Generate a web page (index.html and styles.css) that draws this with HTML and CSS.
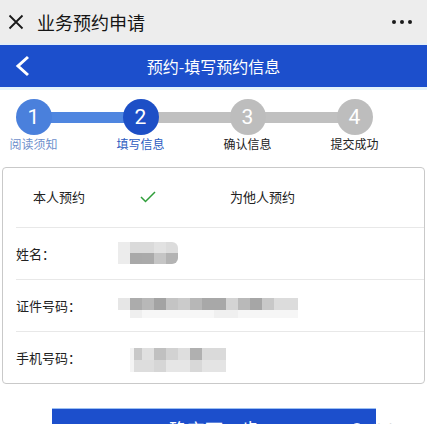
FILE: index.html
```html
<!DOCTYPE html>
<html lang="zh-CN">
<head>
<meta charset="utf-8">
<title>业务预约申请</title>
<link rel="stylesheet" href="styles.css">
</head>
<body>
  <header class="topbar">
    <svg class="close-icon" width="16" height="16" viewBox="0 0 16 16"><path d="M1.5 1.5 L14.5 14.5 M14.5 1.5 L1.5 14.5" stroke="#1a1a1a" stroke-width="1.8" fill="none"/></svg>
    <span class="topbar-title">业务预约申请</span>
    <span class="more"><i></i><i></i><i></i></span>
  </header>

  <nav class="navbar">
    <span class="back">
      <svg width="16" height="22" viewBox="0 0 16 22"><path d="M13 2 L3 11 L13 20" stroke="#fff" stroke-width="3" fill="none" stroke-linejoin="miter"/></svg>
    </span>
    <span class="nav-title">预约-填写预约信息</span>
    <span></span>
  </nav>

  <ol class="steps">
    <li class="step done"><span class="circle">1</span><span class="label">阅读须知</span></li>
    <li class="step current"><span class="circle">2</span><span class="label">填写信息</span></li>
    <li class="step"><span class="circle">3</span><span class="label">确认信息</span></li>
    <li class="step"><span class="circle">4</span><span class="label">提交成功</span></li>
  </ol>

  <section class="card">
    <div class="row row-choice">
      <div class="option">
        <span>本人预约</span>
        <svg class="check" width="16" height="12" viewBox="0 0 16 12"><path d="M1 6 L5.5 10.5 L15 1" stroke="#2f9e3a" stroke-width="1.5" fill="none"/></svg>
      </div>
      <div class="option"><span>为他人预约</span></div>
    </div>
    <div class="row">
      <span class="field-label">姓名：</span>
      <span class="blur blur-name"></span>
    </div>
    <div class="row">
      <span class="field-label">证件号码：</span>
      <span class="blur blur-id"></span>
    </div>
    <div class="row">
      <span class="field-label">手机号码：</span>
      <span class="blur blur-phone"></span>
    </div>
  </section>

  <div class="actions">
    <button class="primary">确定下一步</button>
    <span class="watermark"><i></i><span>头条</span></span>
  </div>
</body>
</html>
```

FILE: styles.css
```css
html { overflow: hidden; }
body {
  margin: 0;
  background: #fff;
  font-family: "Noto Sans CJK SC", "Noto Sans", sans-serif;
  color: #222;
}

.topbar {
  height: 43px;
  background: #ededed;
  border-bottom: 2px solid #e4eef6;
  display: flex;
  align-items: center;
  padding: 0 15px 0 8px;
}
.close-icon { flex: none; margin-top: 1px; }
.topbar-title {
  margin-left: 13px;
  font-size: 18px;
  color: #151515;
  line-height: 24px;
}
.more { margin-left: auto; display: flex; gap: 4px; }
.more i {
  width: 4px; height: 4px; border-radius: 50%;
  background: #1a1a1a; display: block;
}

.navbar {
  height: 42px;
  background: #1c4fcc;
  border-bottom: 3px solid #e4f3fb;
  display: grid;
  grid-template-columns: 1fr auto 1fr;
  align-items: center;
}
.back { padding-left: 15px; display: flex; }
.nav-title { color: #fff; font-size: 16px; line-height: 20px; }

.steps {
  list-style: none;
  margin: 0 0 0 -20px;
  padding: 9px 0 0;
  display: grid;
  grid-template-columns: repeat(4, 107px);
  height: 68px;
}
.step {
  position: relative;
  display: flex;
  flex-direction: column;
  align-items: center;
}
.step::after {
  content: "";
  position: absolute;
  top: 13px;
  left: 50%;
  width: 100%;
  height: 11px;
  background: #c0c0c0;
}
.step:last-child::after { display: none; }
.step.done::after { background: #4f86e0; }
.circle {
  position: relative;
  z-index: 1;
  width: 36px; height: 36px;
  border-radius: 50%;
  background: #bdbdbd;
  color: #fff;
  font-family: Roboto, "Noto Sans", sans-serif;
  font-size: 21px;
  line-height: 36px;
  text-align: center;
}
.step.done .circle { background: #4a80dc; }
.step.current .circle { background: #1d4fc6; }
.label {
  font-size: 12px;
  line-height: 16px;
  margin-top: 1px;
  color: #222;
  white-space: nowrap;
}
.step.done .label { color: #6e8fcb; }
.step.current .label { color: #2c5bbf; }

.card {
  margin: 0 2px;
  border: 1px solid #c9c9c9;
  border-radius: 4px;
}
.row {
  margin-left: 13px;
  height: 51px;
  border-bottom: 1px solid #e8e8e8;
  display: flex;
  align-items: center;
  font-size: 13px;
  color: #222;
}
.row:last-child { border-bottom: none; }
.row-choice { height: 56px; padding-bottom: 3px; }
.option {
  width: 197px;
  display: flex;
  align-items: center;
  padding-left: 17px;
  box-sizing: border-box;
}
.option span { width: 107px; }
.check { margin-top: 2px; }
.field-label { width: 102px; flex: none; }

.blur { display: block; height: 22px; }
.blur-name {
  width: 60px;
  margin-top: -2px;
  border-radius: 0 6px 6px 0;
  background:
    linear-gradient(to right, #ececec 0 12px, #dadada 12px 36px, #e2e2e2 36px 48px, #dcdcdc 48px 60px) top / 100% 11px no-repeat,
    linear-gradient(to right, #ececec 0 12px, #a9a9a9 12px 24px, #aaaaaa 24px 36px, #c5c5c5 36px 48px, #b3b3b3 48px 60px) bottom / 100% 11px no-repeat;
}
.blur-id {
  width: 180px;
  height: 20px;
  margin-top: 4px;
  background:
    linear-gradient(to right, #e6e6e6 0 12px, #acacac 12px 24px, #b8b8b8 24px 36px, #a3a3a3 36px 48px, #c4c4c4 48px 60px, #cbcbcb 60px 72px, #b7b7b7 72px 84px, #a8a8a8 84px 108px, #d4d4d4 108px 120px, #b9b9b9 120px 132px, #a6a6a6 132px 144px, #c8c8c8 144px 156px, #dcdcdc 156px 180px) top / 100% 12px no-repeat,
    linear-gradient(to right, #fff 0 12px, #efefef 12px 24px, #f7f7f7 24px 96px, #f0f0f0 96px 120px, #f6f6f6 120px 180px) bottom / 100% 8px no-repeat;
}
.blur-phone {
  width: 96px;
  height: 24px;
  margin-left: 12px;
  margin-top: 4px;
  background:
    linear-gradient(to right, #f2f2f2 0 4px, #c8c8c8 4px 12px, #e0e0e0 12px 24px, #c0c0c0 24px 36px, #d2d2d2 36px 48px, #dedede 48px 60px, #b0b0b0 60px 72px, #dadada 72px 96px) top / 100% 12px no-repeat,
    linear-gradient(to right, #f4f4f4 0 4px, #dddddd 4px 24px, #d6d6d6 24px 36px, #e6e6e6 36px 60px, #d8d8d8 60px 72px, #e4e4e4 72px 96px) bottom / 100% 12px no-repeat;
}

.actions {
  position: relative;
  margin-top: 24px;
  padding-left: 52px;
}
.primary {
  display: block;
  width: 324px;
  border: none;
  border-top: 1px solid #9cc0f2;
  background: #1c4fcc;
  color: #fff;
  font-family: "Noto Sans CJK SC", sans-serif;
  font-size: 18px;
  line-height: 18px;
  padding: 11px 0 16px;
  text-align: center;
}
.watermark {
  position: absolute;
  left: 351px;
  top: 11px;
  display: flex;
  align-items: center;
  gap: 8px;
  color: #d8d8d8;
  font-size: 14px;
}
.watermark i {
  display: block;
  width: 12px; height: 12px;
  border-radius: 50%;
  background: #fff;
}
```
